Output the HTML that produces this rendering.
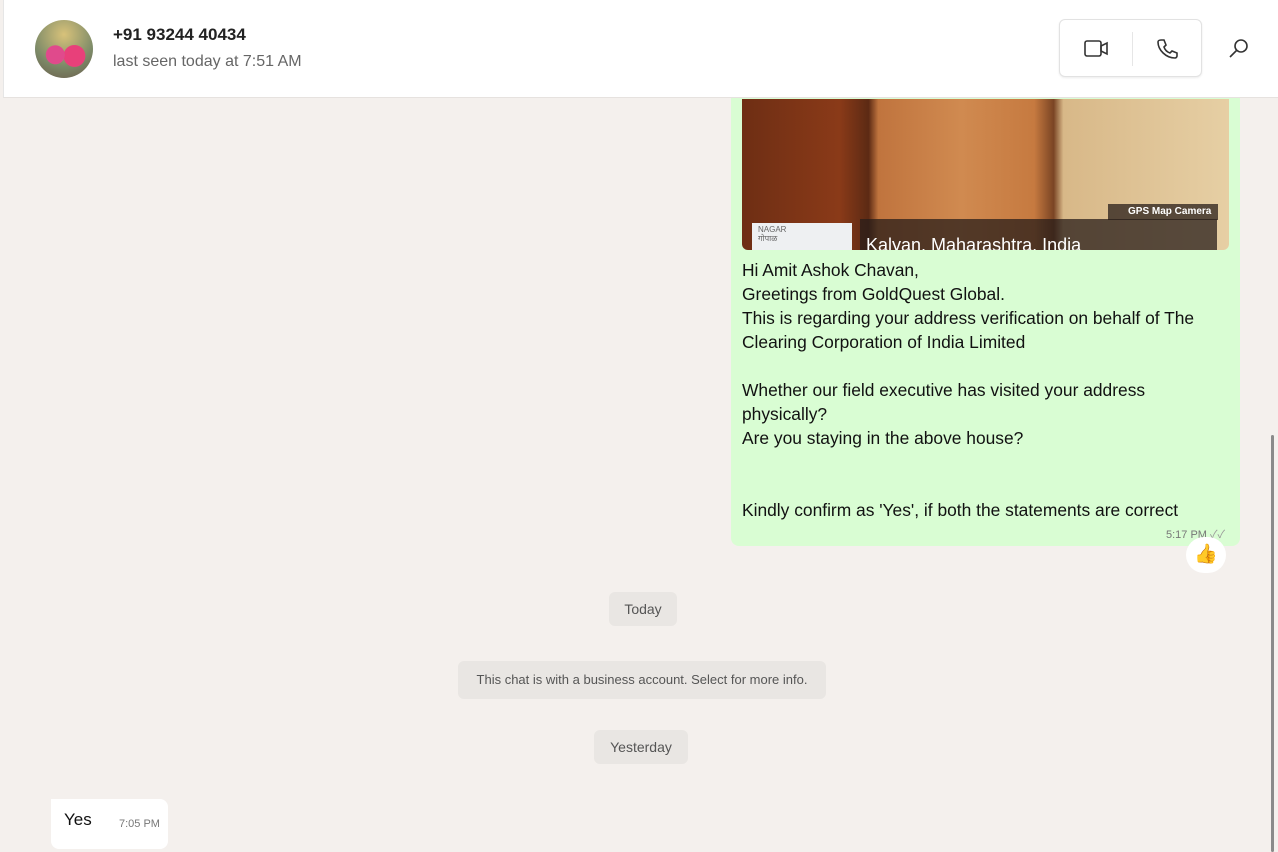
<!DOCTYPE html>
<html><head><meta charset="utf-8"><style>
*{margin:0;padding:0;box-sizing:border-box}
body{width:1278px;height:852px;overflow:hidden;background:#f4f0ed;font-family:"Liberation Sans","Noto Sans CJK SC",sans-serif;position:relative;color:#111}
.hdr{position:absolute;left:3px;top:0;width:1275px;height:98px;background:#fff;border-bottom:1px solid #e6e2df;border-left:1px solid #e6e6e6;z-index:2}
.av{position:absolute;left:35px;top:20px;width:58px;height:58px;border-radius:50%;z-index:3;background:radial-gradient(circle at 35% 60%,#e04a8c 0 18%,transparent 19%),radial-gradient(circle at 68% 62%,#e8407a 0 20%,transparent 21%),radial-gradient(circle at 50% 25%,#d8c27a,#7c8a68 60%,#6a5a4a)}
.name{position:absolute;left:113px;top:25px;font-size:17px;font-weight:bold;color:#222;z-index:3}
.seen{position:absolute;left:113px;top:53px;font-size:16px;color:#666;z-index:3}
.btns{position:absolute;left:1059px;top:19px;width:143px;height:58px;border:1px solid #e2e2e2;border-radius:6px;background:#fff;box-shadow:0 1px 2px rgba(0,0,0,.08);z-index:3}
.sep{position:absolute;left:72px;top:12px;width:1px;height:34px;background:#e6e6e6}
.bub{position:absolute;left:731px;top:98px;width:509px;height:448px;background:#d9fdd3;border-radius:0 0 8px 8px}
.img{position:absolute;left:742px;top:99px;width:487px;height:151px;border-radius:0 0 6px 6px;overflow:hidden;background:linear-gradient(90deg,#6e2e14 0,#8a3a18 20%,#5c2a14 26%,#c0743e 28%,#d08a50 45%,#c67a40 60%,#7a4424 64%,#d8b888 66%,#e6cfa4 100%)}
.txt{position:absolute;left:742px;top:258px;font-size:17.4px;line-height:24px;color:#111;white-space:pre}
.time{position:absolute;left:1166px;top:526px;font-size:11px;color:#777}
.react{position:absolute;left:1186px;top:537px;width:40px;height:36px;border-radius:18px;background:#fff;font-size:19px;text-align:center;line-height:36px}
.pill{position:absolute;background:#e9e6e3;border-radius:6px;font-size:14px;color:#555;text-align:center}
.yes{position:absolute;left:51px;top:799px;width:117px;height:50px;background:#fff;border-radius:0 8px 8px 8px}
.scroll{position:absolute;left:1271px;top:435px;width:3px;height:417px;background:#8a8a8a;border-radius:2px}
</style></head><body>
<div class="hdr"></div>
<div class="av"></div>
<div class="name">+91 93244 40434</div>
<div class="seen">last seen today at 7:51 AM</div>
<div class="btns"><svg style="position:absolute;left:24px;top:18px" width="26" height="22" viewBox="0 0 26 22" fill="none" stroke="#333" stroke-width="1.6"><rect x="1" y="3" width="16" height="15" rx="2"/><path d="M17 8l6-3v11l-6-3z"/></svg><div class="sep"></div><svg style="position:absolute;left:95px;top:17px" width="24" height="24" viewBox="0 0 24 24" fill="none" stroke="#333" stroke-width="1.6"><path d="M6 3l3 0 2 5-2 2c1 3 3 5 6 6l2-2 5 2v3c0 1-1 2-2 2C11 21 3 13 3 5c0-1 1-2 3-2z"/></svg></div>
<svg style="position:absolute;left:1228px;top:38px;z-index:3" width="22" height="22" viewBox="0 0 22 22" fill="none" stroke="#333" stroke-width="1.6"><circle cx="13" cy="8" r="6"/><path d="M9 12l-7 7"/></svg>
<div class="bub"></div>
<div class="img">
<div style="position:absolute;left:118px;top:120px;width:357px;height:31px;background:rgba(40,30,25,.75)"></div>
<div style="position:absolute;left:10px;top:124px;width:100px;height:27px;background:#eef0f2;font-size:8px;color:#666;padding:2px 6px;line-height:9px">NAGAR<br>गोपाळ</div>
<div style="position:absolute;left:124px;top:136px;color:#fff;font-size:18px">Kalyan, Maharashtra, India</div>
<div style="position:absolute;left:366px;top:105px;width:110px;height:16px;background:rgba(40,30,25,.75);color:#fff;font-size:10px;font-weight:bold;line-height:16px;padding-left:20px">GPS Map Camera</div>
</div>
<div class="txt">Hi Amit Ashok Chavan,
Greetings from GoldQuest Global.
This is regarding your address verification on behalf of The
Clearing Corporation of India Limited

Whether our field executive has visited your address
physically?
Are you staying in the above house?


Kindly confirm as 'Yes', if both the statements are correct</div>
<div class="time">5:17 PM <span style="color:#999">✓✓</span></div>
<div class="react">👍</div>
<div class="pill" style="left:609px;top:592px;width:68px;height:34px;line-height:34px">Today</div>
<div class="pill" style="left:458px;top:661px;width:368px;height:38px;line-height:38px;font-size:13px">This chat is with a business account. Select for more info.</div>
<div class="pill" style="left:594px;top:730px;width:94px;height:34px;line-height:34px">Yesterday</div>
<div class="yes"><span style="position:absolute;left:13px;top:11px;font-size:17px">Yes</span><span style="position:absolute;left:68px;top:19px;font-size:11px;color:#777">7:05 PM</span></div>
<div class="scroll"></div>
</body></html>
